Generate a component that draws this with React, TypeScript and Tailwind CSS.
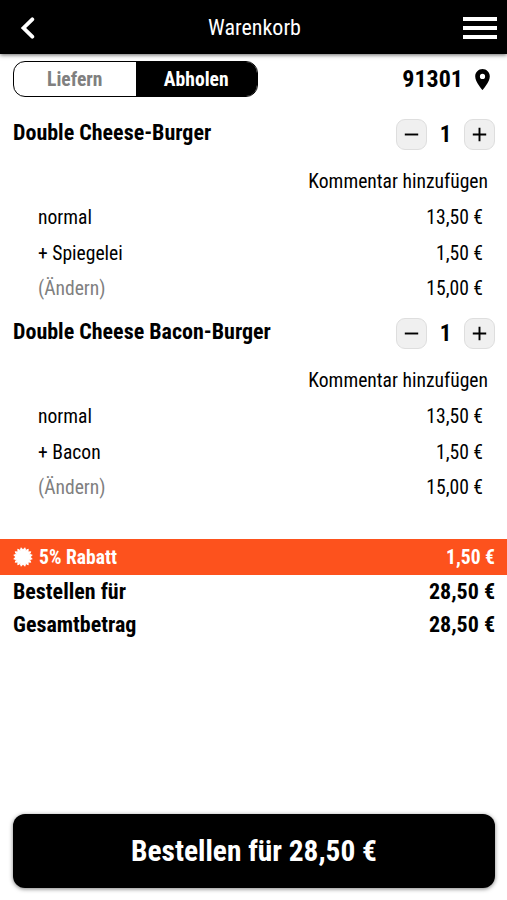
import React, { useState } from 'react';
import { MdAdd, MdLocationOn, MdRemove } from 'react-icons/md';

interface CartLine {
  label: string;
  price: string;
  muted?: boolean;
}

interface CartItem {
  id: number;
  name: string;
  lines: CartLine[];
}

const items: CartItem[] = [
  {
    id: 1,
    name: 'Double Cheese-Burger',
    lines: [
      { label: 'normal', price: '13,50 €' },
      { label: '+ Spiegelei', price: '1,50 €' },
      { label: '(Ändern)', price: '15,00 €', muted: true },
    ],
  },
  {
    id: 2,
    name: 'Double Cheese Bacon-Burger',
    lines: [
      { label: 'normal', price: '13,50 €' },
      { label: '+ Bacon', price: '1,50 €' },
      { label: '(Ändern)', price: '15,00 €', muted: true },
    ],
  },
];

// 16-pointed star for the discount badge
const burstPoints = Array.from({ length: 32 }, (_, i) => {
  const r = i % 2 === 0 ? 9.4 : 7;
  const a = ((i + 1) * Math.PI) / 16;
  return `${(10 + r * Math.sin(a)).toFixed(2)},${(10 - r * Math.cos(a)).toFixed(2)}`;
}).join(' ');

function Header() {
  return (
    <header className="relative flex h-[54px] shrink-0 items-center justify-between bg-black pt-px pr-[10px] pl-5 text-white shadow-[0_1px_4px_rgba(0,0,0,0.6)]">
      <button aria-label="Zurück" className="w-[26px]">
        <svg
          width="16"
          height="22"
          viewBox="0 0 16 22"
          fill="none"
          stroke="currentColor"
          strokeWidth="3.8"
          strokeLinecap="round"
        >
          <path d="M12.3 2.3 3.5 11l8.8 8.7" />
        </svg>
      </button>
      <h1 className="text-[22px] leading-none">Warenkorb</h1>
      <button aria-label="Menü" className="flex w-[34px] flex-col gap-[5px]">
        <span className="h-1 w-full bg-white" />
        <span className="h-1 w-full bg-white" />
        <span className="h-1 w-full bg-white" />
      </button>
    </header>
  );
}

function Quantity() {
  const [count, setCount] = useState(1);
  const buttonClass =
    'flex h-[31px] w-[31px] items-center justify-center rounded-[9px] border border-[#dedede] bg-[#f0f0f0]';

  return (
    <div className="flex items-center">
      <button aria-label="Weniger" className={buttonClass} onClick={() => setCount(Math.max(0, count - 1))}>
        <MdRemove size={23} />
      </button>
      <span className="w-[37px] text-center text-[23px] font-bold">{count}</span>
      <button aria-label="Mehr" className={buttonClass} onClick={() => setCount(count + 1)}>
        <MdAdd size={23} />
      </button>
    </div>
  );
}

function Item({ item }: { item: CartItem }) {
  return (
    <section className="h-[199px]">
      <div className="flex h-[38px] items-center justify-between pr-3 pl-[13px]">
        <h2 className="pb-[3px] text-[22px] leading-none font-bold">{item.name}</h2>
        <Quantity />
      </div>
      <div className="mt-[10px] flex h-[36px] items-center justify-end pr-[19px]">
        <button>Kommentar hinzufügen</button>
      </div>
      {item.lines.map((line) => (
        <div key={line.label} className="flex h-[35.5px] items-center justify-between pt-[2px] pr-6 pl-[38px]">
          <span className={line.muted ? 'text-[#808080]' : ''}>{line.label}</span>
          <span>{line.price}</span>
        </div>
      ))}
    </section>
  );
}

export default function App() {
  const [mode, setMode] = useState<'liefern' | 'abholen'>('abholen');

  return (
    <div className="flex h-[900px] w-[507px] flex-col overflow-hidden bg-white font-['Roboto_Condensed',Roboto,sans-serif] text-[19.6px] leading-none text-black [font-stretch:75%]">
      <Header />

      <div className="mt-[7px] flex h-9 shrink-0 items-center justify-between px-[13px]">
        <div className="flex h-9 w-[245px] overflow-hidden rounded-[12px] border border-black font-bold">
          <button
            onClick={() => setMode('liefern')}
            className={`w-1/2 pt-[2px] ${mode === 'liefern' ? 'bg-black text-white' : 'text-[#808080]'}`}
          >
            Liefern
          </button>
          <button
            onClick={() => setMode('abholen')}
            className={`w-1/2 pt-[2px] ${mode === 'abholen' ? 'bg-black text-white' : 'text-[#808080]'}`}
          >
            Abholen
          </button>
        </div>
        <div className="flex items-center gap-[7px] text-[24px] font-bold">
          91301
          <MdLocationOn size={25} className="-mr-px" />
        </div>
      </div>

      <main className="mt-[18.5px]">
        {items.map((item) => (
          <Item key={item.id} item={item} />
        ))}
      </main>

      <div className="mt-[25.5px] flex h-9 items-center bg-[#fd521d] pr-3 pl-[13px] font-bold text-white">
        <svg
          width="20"
          height="20"
          viewBox="0 0 20 20"
          fill="currentColor"
          stroke="currentColor"
          strokeWidth="1"
          strokeLinejoin="round"
        >
          <polygon points={burstPoints} />
        </svg>
        <span className="ml-[6px] pt-[2px]">5% Rabatt</span>
        <span className="ml-auto pt-[2px]">1,50 €</span>
      </div>
      <div className="flex h-[33px] items-center justify-between pr-3 pl-[13px] text-[22px] font-bold">
        <span>Bestellen für</span>
        <span>28,50 €</span>
      </div>
      <div className="flex h-[33px] items-center justify-between pr-3 pl-[13px] text-[22px] font-bold">
        <span>Gesamtbetrag</span>
        <span>28,50 €</span>
      </div>

      <button className="mr-3 mb-3 ml-[13px] mt-auto h-[74px] shrink-0 rounded-[12px] bg-black pt-[2px] text-[29.4px] font-bold text-white shadow-[0_1px_4px_rgba(0,0,0,0.5)]">
        Bestellen für 28,50 €
      </button>
    </div>
  );
}
